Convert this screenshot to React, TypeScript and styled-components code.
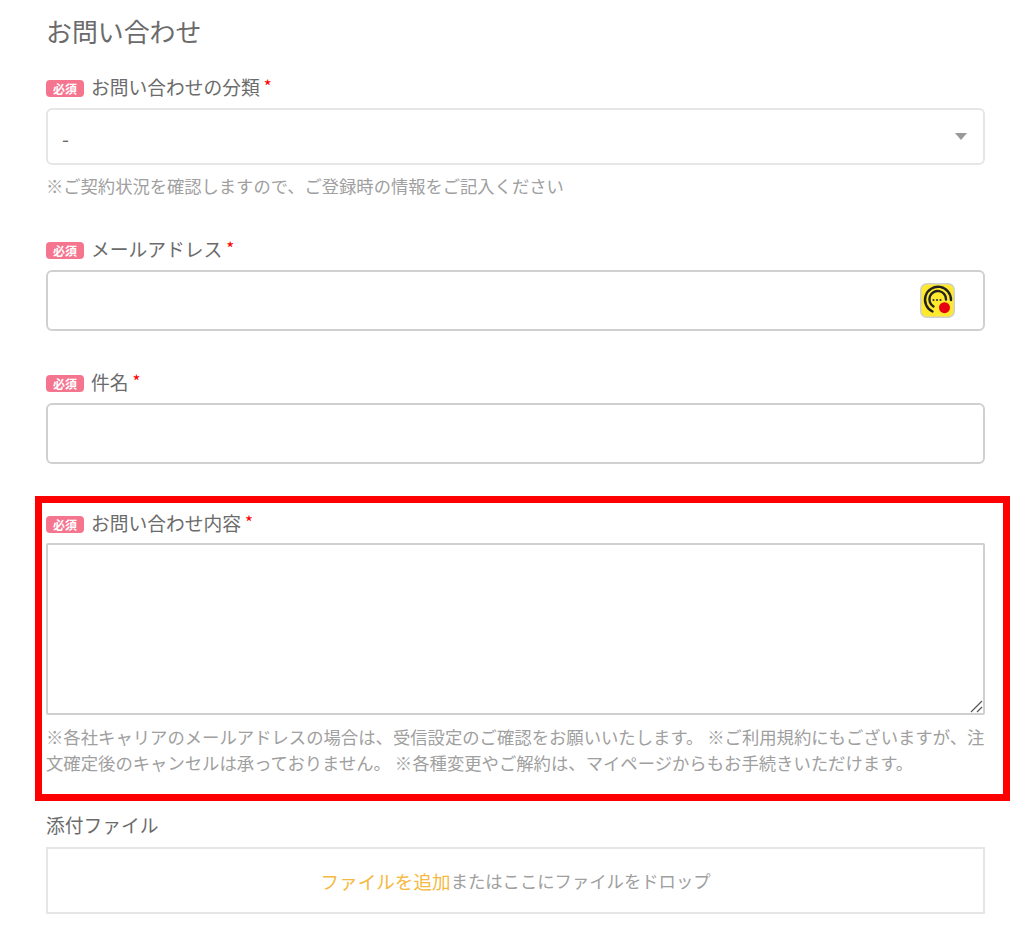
import React, {FC} from 'react';
import styled, {createGlobalStyle} from 'styled-components';

const GlobalStyle = createGlobalStyle`
  html, body {
    margin: 0;
    padding: 0;
    background: #fff;
  }
  body {
    font-family: "Noto Sans CJK JP", "Liberation Sans", sans-serif;
    color: #666;
  }
`

const Page = styled.div`
  width: 1024px;
  height: 934px;
  box-sizing: border-box;
  padding: 13px 39px 0 46px;
  overflow: hidden;
`

const Title = styled.h1`
  margin: 0;
  font-size: 25.9px;
  line-height: 36px;
  font-weight: 400;
  color: #6b6b6b;
`

const Field = styled.div<{top: number}>`
  margin-top: ${({top}) => top}px;
`

const Highlight = styled.div`
  margin: 32px -25px 0 -11px;
  padding: 7px 18px 18px 4px;
  border: 7px solid #ff0000;
`

const LabelRow = styled.div`
  display: flex;
  align-items: center;
  height: 26px;
  margin-bottom: 8px;
`

const Badge = styled.span`
  width: 38px;
  height: 17px;
  margin: 3px 7px 0 0;
  border-radius: 4px;
  background: #f5758f;
  color: #fff;
  font-size: 12px;
  font-weight: 700;
  line-height: 17px;
  text-align: center;
`

const LabelText = styled.label`
  font-size: 18.75px;
  line-height: 26px;
  color: #6b6b6b;
`

const Star = styled.span`
  margin-left: 4px;
  color: #ff0000;
  font-size: 17px;
  position: relative;
  top: -2px;
`

const SelectBox = styled.div`
  display: flex;
  align-items: center;
  justify-content: space-between;
  box-sizing: border-box;
  height: 57px;
  padding: 4px 16px 0 14px;
  border: 2px solid #e6e6e6;
  border-radius: 6px;
  font-size: 20px;
  color: #666;
`

const Caret = styled.span`
  width: 0;
  height: 0;
  margin-bottom: 4px;
  border-left: 6.5px solid transparent;
  border-right: 6.5px solid transparent;
  border-top: 7px solid #999;
`

const InputBox = styled.div`
  display: flex;
  align-items: center;
  justify-content: flex-end;
  box-sizing: border-box;
  height: 61px;
  padding-right: 28px;
  border: 2px solid #d0d0d0;
  border-radius: 6px;
`

const Hint = styled.p`
  margin: 8px 0 0;
  font-size: 17.3px;
  line-height: 26px;
  color: #a0a0a0;
`

const Textarea = styled.div`
  position: relative;
  box-sizing: border-box;
  height: 172px;
  margin-top: -1px;
  border: 2px solid #d0d0d0;
  border-radius: 2px;
`

const Grip = styled.svg`
  position: absolute;
  right: 0;
  bottom: 0;
`

const HelpText = styled.p`
  margin: 9px -4px 0 0;
  font-size: 17.35px;
  line-height: 26px;
  color: #a0a0a0;
`

const PlainLabel = styled.div`
  margin: 11px 0 9px;
  font-size: 18.75px;
  line-height: 26px;
  color: #6b6b6b;
`

const DropZone = styled.div`
  display: flex;
  align-items: center;
  justify-content: center;
  box-sizing: border-box;
  height: 67px;
  border: 2px solid #e6e6e6;
  font-size: 17.33px;
  color: #a0a0a0;
`

const AddLink = styled.span`
  color: #f5b942;
  font-size: 18.6px;
`

const AssistIcon: FC = () => (
    <svg width="35" height="35" viewBox="0 0 35 35">
        <rect x="0.75" y="0.75" width="33.5" height="33.5" rx="6" fill="#ffe92e" stroke="#cfcfcf" strokeWidth="1.5"/>
        <path d="M12.5 28.5A13 13 0 1 1 31 17" fill="none" stroke="#222" strokeWidth="2.4" strokeLinecap="round"/>
        <path d="M13.5 23.5A8.3 8.3 0 1 1 26 16.5" fill="none" stroke="#222" strokeWidth="2.4" strokeLinecap="round"/>
        <circle cx="13.5" cy="17" r="1.1" fill="#333"/>
        <circle cx="17" cy="17" r="1.1" fill="#333"/>
        <circle cx="20.5" cy="17" r="1.1" fill="#333"/>
        <circle cx="24.5" cy="24.7" r="5.5" fill="#e60012"/>
    </svg>
)

const Label: FC<{text: string}> = ({text}) => (
    <LabelRow>
        <Badge>必須</Badge>
        <LabelText>{text}<Star>*</Star></LabelText>
    </LabelRow>
)

const App: FC = () => {
    return (
        <Page>
            <GlobalStyle/>
            <Title>お問い合わせ</Title>
            <Field top={25}>
                <Label text="お問い合わせの分類"/>
                <SelectBox>
                    -
                    <Caret/>
                </SelectBox>
                <Hint>※ご契約状況を確認しますので、ご登録時の情報をご記入ください</Hint>
            </Field>
            <Field top={37}>
                <Label text="メールアドレス"/>
                <InputBox><AssistIcon/></InputBox>
            </Field>
            <Field top={38}>
                <Label text="件名"/>
                <InputBox/>
            </Field>
            <Highlight>
                <Label text="お問い合わせ内容"/>
                <Textarea>
                    <Grip width="14" height="14" viewBox="0 0 14 14">
                        <path d="M2 13L13 2M8 13L13 8" stroke="#555" strokeWidth="1.2" fill="none"/>
                    </Grip>
                </Textarea>
                <HelpText>※各社キャリアのメールアドレスの場合は、受信設定のご確認をお願いいたします。 ※ご利用規約にもございますが、注文確定後のキャンセルは承っておりません。 ※各種変更やご解約は、マイページからもお手続きいただけます。</HelpText>
            </Highlight>
            <PlainLabel>添付ファイル</PlainLabel>
            <DropZone><AddLink>ファイルを追加</AddLink>またはここにファイルをドロップ</DropZone>
        </Page>
    );
};

export default App;
